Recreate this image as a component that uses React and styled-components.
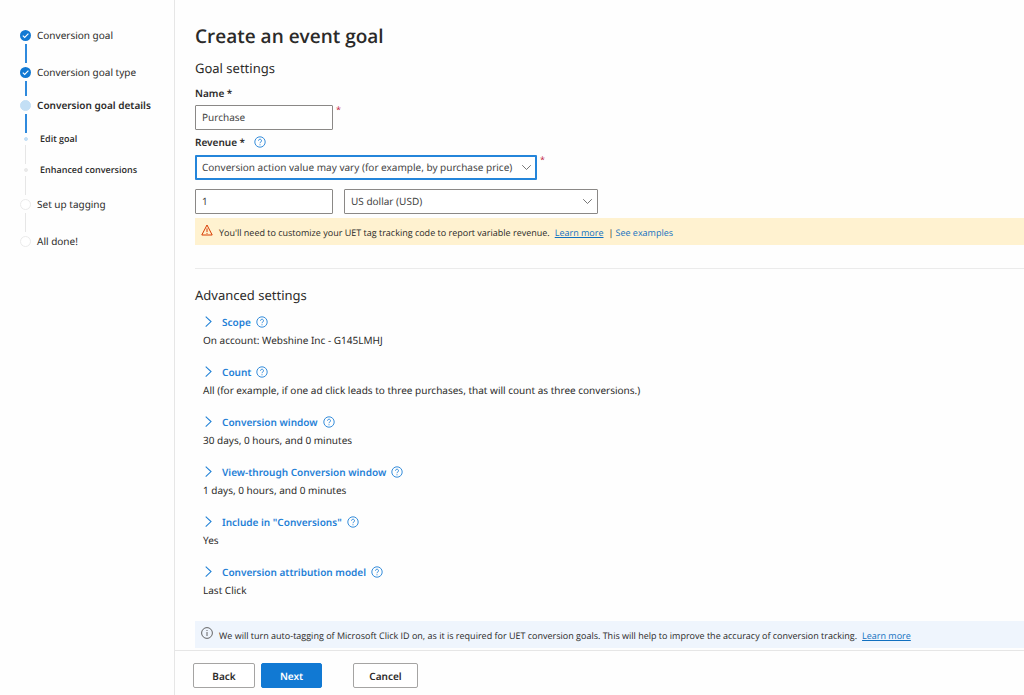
import React from "react";
import styled, { createGlobalStyle, css } from "styled-components";

const BLUE = "#1179d3";
const LINK_BLUE = "#1f80d6";
const TEXT = "#2b2a29";

const GlobalStyle = createGlobalStyle`
  *, *::before, *::after { box-sizing: border-box; }
  body {
    margin: 0;
    background: #fefefe;
    color: ${TEXT};
    font-family: "Segoe UI", "Noto Sans", "Open Sans", sans-serif;
    font-size: 10px;
    line-height: 16px;
    text-rendering: geometricPrecision;
  }
  button, input, select { font: inherit; color: inherit; margin: 0; text-rendering: inherit; }
`;

const Page = styled.div`
  display: flex;
  min-height: 100vh;
`;

/* Wizard steps */

const Sidebar = styled.nav`
  flex: 0 0 175px;
  padding: 29px 0 0 20px;
  border-right: 1px solid #e6e6e6;
`;

const StepList = styled.ol`
  list-style: none;
  margin: 0;
  padding: 0;
`;

const Step = styled.li`
  display: grid;
  grid-template-columns: 11px 1fr;
  justify-items: center;
  align-items: center;
`;

const Marker = styled.span`
  display: flex;
  align-items: center;
  justify-content: center;
  height: ${(p) => (p.$small ? 6 : 12)}px;
`;

const Dot = styled.span`
  width: ${(p) => (p.$small ? 4 : 11)}px;
  height: ${(p) => (p.$small ? 4 : 11)}px;
  border-radius: 50%;
  background: ${(p) => p.$fill};
  border: 1px solid ${(p) => p.$edge || p.$fill};
`;

const StepLabel = styled.span`
  justify-self: start;
  padding-left: ${(p) => (p.$small ? 9 : 6)}px;
  height: ${(p) => (p.$small ? 6 : 12)}px;
  line-height: ${(p) => (p.$small ? 6 : 12)}px;
  font-family: ${(p) => (p.$small ? '"Segoe UI", "Open Sans", sans-serif' : "inherit")};
  font-size: ${(p) => (p.$small ? 9 : 10)}px;
  font-weight: ${(p) => (p.$strong ? 600 : 400)};
  white-space: nowrap;
`;

const Connector = styled.span`
  width: ${(p) => (p.$done ? 2 : 1)}px;
  height: ${(p) => p.$length}px;
  margin: 3px 0;
  background: ${(p) => (p.$done ? "#2f8add" : "#e6e6e6")};
`;

/* Form */

const Main = styled.main`
  flex: 1;
  min-width: 0;
  display: flex;
  flex-direction: column;
`;

const Content = styled.form`
  padding: 22px 0 2px 20px;
`;

const Title = styled.h1`
  margin: 0 0 8px;
  font-family: "Segoe UI", "Open Sans", sans-serif;
  font-size: 19px;
  line-height: 28px;
  font-weight: 600;
`;

const SectionTitle = styled.h2`
  margin: 0 0 7px;
  font-size: 13px;
  line-height: 20px;
  font-weight: 400;
`;

const LabelRow = styled.div`
  display: flex;
  align-items: center;
  gap: 9px;
  margin-bottom: ${(p) => p.$after}px;
`;

const FieldLabel = styled.label`
  font-size: 10px;
  line-height: 16px;
  font-weight: 600;
`;

const FieldRow = styled.div`
  display: flex;
  align-items: flex-start;
  gap: ${(p) => p.$gap}px;
  margin-bottom: ${(p) => p.$after}px;
`;

const Required = styled.span`
  color: #c4314b;
  font-size: 9px;
  line-height: 10px;
`;

const field = css`
  height: 25px;
  padding: 0 6px 2px;
  border: 1px solid #8a8886;
  border-radius: 1px;
  background: #fff;
  color: #444;
  font-size: 10px;
  line-height: 20px;
`;

const TextBox = styled.input`
  ${field}
  width: 138px;
`;

const SelectWrap = styled.span`
  position: relative;
  flex: 0 1 ${(p) => p.$width}px;
`;

const SelectBox = styled.select`
  ${field}
  appearance: none;
  display: block;
  width: 100%;
  ${(p) => p.$active && css`
    border: 2px solid #2485da;
    padding: 0 5px 1px;
  `}
`;

const SelectArrow = styled.svg`
  position: absolute;
  right: 5px;
  top: 7px;
  pointer-events: none;
`;

const Banner = styled.div`
  display: flex;
  align-items: flex-start;
  gap: 6px;
  padding: 6px 0 4px 6px;
  background: ${(p) => p.$fill};
  font-family: "Segoe UI", "Open Sans", sans-serif;
  font-size: 9px;

  svg { flex: none; }
`;

const BannerText = styled.p`
  margin: 0;
  padding-top: 1px;
  line-height: 16px;
`;

const TextLink = styled.a`
  color: #1170c0;
  text-decoration: ${(p) => (p.$plain ? "none" : "underline")};
`;

const LearnMore = styled(TextLink)`
  margin-left: 5px;
`;

const Divider = styled.span`
  margin: 0 2px 0 5px;
`;

const Rule = styled.hr`
  margin: 23px 0 16px;
  border: 0;
  height: 1px;
  background: #ebebeb;
`;

const Settings = styled.div`
  padding: 0 0 9px 8px;
`;

const Setting = styled.section`
  padding-bottom: 14px;
`;

const SettingHead = styled.div`
  display: flex;
  align-items: center;
  gap: 5px;
  height: 20px;
`;

const Toggle = styled.button`
  display: flex;
  align-items: center;
  gap: 9px;
  padding: 0;
  border: 0;
  background: none;
  color: ${LINK_BLUE};
  font-weight: 600;
`;

const SettingValue = styled.p`
  margin: 0;
  line-height: 16px;
`;

const HelpButton = styled.button`
  display: flex;
  padding: 0;
  border: 0;
  background: none;
  color: ${LINK_BLUE};
`;

const Footer = styled.footer`
  display: flex;
  padding: 12px 0 7px 18px;
  border-top: 1px solid #e6e6e6;
`;

const Button = styled.button`
  height: 25px;
  width: ${(p) => p.$width}px;
  margin-right: ${(p) => p.$after || 0}px;
  padding: 0;
  border: 1px solid ${(p) => (p.$primary ? BLUE : "#a5a4a3")};
  border-radius: 2px;
  background: ${(p) => (p.$primary ? BLUE : "#fff")};
  color: ${(p) => (p.$primary ? "#fff" : TEXT)};
  font-weight: 600;
`;

function Help({ about }) {
  return (
    <HelpButton type="button" aria-label={`Help: ${about}`}>
      <svg width="12" height="12" viewBox="0 0 12 12" fill="none" stroke="currentColor">
        <circle cx="6" cy="6" r="5.2" strokeWidth="0.9" />
        <path d="M4.5 4.7a1.5 1.5 0 1 1 2.4 1.2C6.3 6.3 6 6.5 6 7.2" strokeWidth="0.9" />
        <circle cx="6" cy="8.7" r="0.55" fill="currentColor" stroke="none" />
      </svg>
    </HelpButton>
  );
}

function Check() {
  return (
    <svg width="11" height="11" viewBox="0 0 11 11" fill="none">
      <circle cx="5.5" cy="5.5" r="5.5" fill={BLUE} />
      <path d="M2.8 5.6 4.7 7.4 8.4 3.7" stroke="#fff" strokeWidth="1.1" />
    </svg>
  );
}

function Arrow() {
  return (
    <SelectArrow width="11" height="11" viewBox="0 0 11 11" fill="none" stroke="#666">
      <path d="M1.2 3.2 5.5 7.5 9.8 3.2" strokeWidth="0.9" />
    </SelectArrow>
  );
}

const STEPS = [
  { label: "Conversion goal", state: "done", line: 19 },
  { label: "Conversion goal type", state: "done", line: 15 },
  { label: "Conversion goal details", state: "current", strong: true, line: 19 },
  { label: "Edit goal", state: "current", small: true, strong: true, line: 19 },
  { label: "Enhanced conversions", state: "next", small: true, strong: true, line: 19 },
  { label: "Set up tagging", state: "next", line: 19 },
  { label: "All done!", state: "next" },
];

const SETTINGS = [
  ["Scope", "On account: Webshine Inc - G145LMHJ"],
  ["Count", "All (for example, if one ad click leads to three purchases, that will count as three conversions.)"],
  ["Conversion window", "30 days, 0 hours, and 0 minutes"],
  ["View-through Conversion window", "1 days, 0 hours, and 0 minutes"],
  ["Include in \"Conversions\"", "Yes"],
  ["Conversion attribution model", "Last Click"],
];

function StepMarker({ state, small }) {
  if (state === "done") return <Check />;
  if (state === "current") return <Dot $small={small} $fill="#c3dff5" />;
  return small ? <Dot $small $fill="#e9e9e9" /> : <Dot $fill="#fff" $edge="#ebebeb" />;
}

export default function App() {
  return (
    <>
      <GlobalStyle />
      <Page>
        <Sidebar aria-label="Steps">
          <StepList>
            {STEPS.map((s) => (
              <Step key={s.label}>
                <Marker $small={s.small}>
                  <StepMarker state={s.state} small={s.small} />
                </Marker>
                <StepLabel $small={s.small} $strong={s.strong}>{s.label}</StepLabel>
                {s.line && (
                  <Connector $length={s.line} $done={s.state !== "next" && !s.small} />
                )}
              </Step>
            ))}
          </StepList>
        </Sidebar>
        <Main>
          <Content id="goal" onSubmit={(e) => e.preventDefault()}>
            <Title>Create an event goal</Title>
            <SectionTitle>Goal settings</SectionTitle>
            <LabelRow $after={4}>
              <FieldLabel htmlFor="name">Name *</FieldLabel>
            </LabelRow>
            <FieldRow $gap={3} $after={4}>
              <TextBox id="name" defaultValue="Purchase" />
              <Required>*</Required>
            </FieldRow>
            <LabelRow $after={5}>
              <FieldLabel htmlFor="revenue">Revenue *</FieldLabel>
              <Help about="Revenue" />
            </LabelRow>
            <FieldRow $gap={3} $after={9}>
              <SelectWrap $width={342}>
                <SelectBox id="revenue" $active>
                  <option>Conversion action value may vary (for example, by purchase price)</option>
                </SelectBox>
                <Arrow />
              </SelectWrap>
              <Required>*</Required>
            </FieldRow>
            <FieldRow $gap={11} $after={4}>
              <TextBox aria-label="Value" defaultValue="1" />
              <SelectWrap $width={254}>
                <SelectBox aria-label="Currency">
                  <option>US dollar (USD)</option>
                </SelectBox>
                <Arrow />
              </SelectWrap>
            </FieldRow>
            <Banner $fill="#fff2d0">
              <svg width="12" height="12" viewBox="0 0 12 12" fill="none" stroke="#d83b01">
                <path d="M6 1 11.2 11H.8Z" strokeWidth="1" strokeLinejoin="round" />
                <path d="M6 4.4V8M6 8.9V9.9" strokeWidth="1" />
              </svg>
              <BannerText>
                You'll need to customize your UET tag tracking code to report variable revenue.
                <LearnMore href="#learn">Learn more</LearnMore>
                <Divider>|</Divider>
                <TextLink href="#examples" $plain>See examples</TextLink>
              </BannerText>
            </Banner>
            <Rule />
            <SectionTitle>Advanced settings</SectionTitle>
            <Settings>
              {SETTINGS.map(([name, value]) => (
                <Setting key={name}>
                  <SettingHead>
                    <Toggle type="button" aria-expanded="false">
                      <svg width="10" height="12" viewBox="0 0 10 12" fill="none" stroke="currentColor">
                        <path d="M2.7 .6 8 5.6 2.7 10.6" strokeWidth="1.1" />
                      </svg>
                      {name}
                    </Toggle>
                    <Help about={name} />
                  </SettingHead>
                  <SettingValue>{value}</SettingValue>
                </Setting>
              ))}
            </Settings>
            <Banner $fill="#eff5fd">
              <svg width="12" height="12" viewBox="0 0 12 12" fill="none" stroke="#555">
                <circle cx="6" cy="6" r="5.4" strokeWidth="0.9" />
                <path d="M6 5V9M6 3V4" strokeWidth="0.9" />
              </svg>
              <BannerText>
                We will turn auto-tagging of Microsoft Click ID on, as it is required for UET conversion goals. This will help to improve the accuracy of conversion tracking.
                <LearnMore href="#tagging">Learn more</LearnMore>
              </BannerText>
            </Banner>
          </Content>
          <Footer>
            <Button type="button" $width={62} $after={6}>Back</Button>
            <Button type="submit" form="goal" $primary $width={61} $after={31}>Next</Button>
            <Button type="button" $width={65}>Cancel</Button>
          </Footer>
        </Main>
      </Page>
    </>
  );
}
